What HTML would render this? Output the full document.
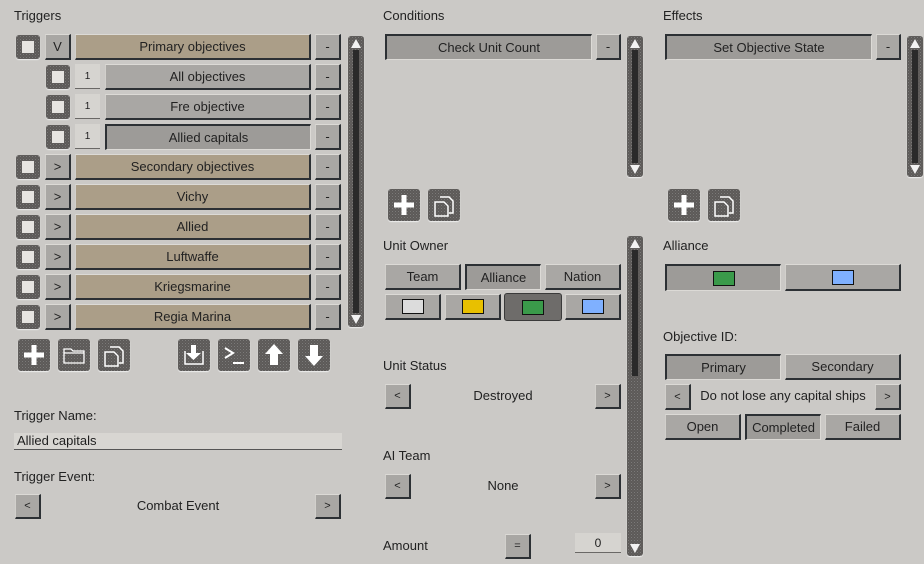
<!DOCTYPE html>
<html><head><meta charset="utf-8"><style>
body{margin:0;width:924px;height:564px;overflow:hidden;background:#cbc9c6;font-family:"Liberation Sans","DejaVu Sans",sans-serif;color:#1e1e1e;position:relative}
div{box-sizing:border-box}
.a{position:absolute}
.l{position:absolute;font-size:13px;color:#222}
.b{position:absolute;background:#a9a7a4;border-top:1px solid #dcdad6;border-left:1px solid #d2d0cc;border-right:2px solid #2c3034;border-bottom:2px solid #2c3034;display:flex;align-items:center;justify-content:center;font-size:13px;color:#222}
.p{border-top:2px solid #2c3034;border-left:2px solid #2c3034;border-right:1px solid #dcdad6;border-bottom:1px solid #dcdad6;background:#9d9b98}
.t{background:#ab9e88}
.m{position:absolute;background:radial-gradient(circle,#7c7a78 0.7px,transparent 1.2px) 0 0/3px 3px,radial-gradient(circle,#625f5d 0.8px,transparent 1.3px) 1.5px 1.5px/3px 3px,#454342;border-radius:3px;box-shadow:0 1px 1px #eee}
.cb::after{content:"";position:absolute;left:6px;top:6px;width:12px;height:12px;background:#e6e4e0}
.n{position:absolute;background:#d6d4d0;border-bottom:1px solid #6a6866;font-size:10px;display:flex;align-items:center;justify-content:center}
.sb .tr{position:absolute;left:5px;top:14px;bottom:14px;width:6px;background:#2a2a2a}
.sb .u,.sb .d{position:absolute;left:3px;width:0;height:0;border-left:5px solid transparent;border-right:5px solid transparent}
.sb .u{top:3px;border-bottom:9px solid #f2f2f2}
.sb .d{bottom:3px;border-top:9px solid #f2f2f2}
.sw{width:22px;height:15px;border:1px solid #111}
.ic svg{position:absolute;left:0;top:0}
</style></head><body>

<div class="l" style="left:14px;top:8px">Triggers</div>
<div class="l" style="left:383px;top:8px">Conditions</div>
<div class="l" style="left:663px;top:8px">Effects</div>

<div class="m cb" style="left:16px;top:35px;width:24px;height:24px"></div>
<div class="b" style="left:45px;top:34px;width:26px;height:26px">V</div>
<div class="b t" style="left:75px;top:34px;width:236px;height:26px">Primary objectives</div>
<div class="b" style="left:315px;top:34px;width:26px;height:26px">-</div>

<div class="m cb" style="left:46px;top:65px;width:24px;height:24px"></div>
<div class="n" style="left:75px;top:64px;width:25px;height:25px">1</div>
<div class="b" style="left:105px;top:64px;width:206px;height:26px">All objectives</div>
<div class="b" style="left:315px;top:64px;width:26px;height:26px">-</div>

<div class="m cb" style="left:46px;top:95px;width:24px;height:24px"></div>
<div class="n" style="left:75px;top:94px;width:25px;height:25px">1</div>
<div class="b" style="left:105px;top:94px;width:206px;height:26px">Fre objective</div>
<div class="b" style="left:315px;top:94px;width:26px;height:26px">-</div>

<div class="m cb" style="left:46px;top:125px;width:24px;height:24px"></div>
<div class="n" style="left:75px;top:124px;width:25px;height:25px">1</div>
<div class="b p" style="left:105px;top:124px;width:206px;height:26px">Allied capitals</div>
<div class="b" style="left:315px;top:124px;width:26px;height:26px">-</div>

<div class="m cb" style="left:16px;top:155px;width:24px;height:24px"></div>
<div class="b" style="left:45px;top:154px;width:26px;height:26px">&gt;</div>
<div class="b t" style="left:75px;top:154px;width:236px;height:26px">Secondary objectives</div>
<div class="b" style="left:315px;top:154px;width:26px;height:26px">-</div>

<div class="m cb" style="left:16px;top:185px;width:24px;height:24px"></div>
<div class="b" style="left:45px;top:184px;width:26px;height:26px">&gt;</div>
<div class="b t" style="left:75px;top:184px;width:236px;height:26px">Vichy</div>
<div class="b" style="left:315px;top:184px;width:26px;height:26px">-</div>

<div class="m cb" style="left:16px;top:215px;width:24px;height:24px"></div>
<div class="b" style="left:45px;top:214px;width:26px;height:26px">&gt;</div>
<div class="b t" style="left:75px;top:214px;width:236px;height:26px">Allied</div>
<div class="b" style="left:315px;top:214px;width:26px;height:26px">-</div>

<div class="m cb" style="left:16px;top:245px;width:24px;height:24px"></div>
<div class="b" style="left:45px;top:244px;width:26px;height:26px">&gt;</div>
<div class="b t" style="left:75px;top:244px;width:236px;height:26px">Luftwaffe</div>
<div class="b" style="left:315px;top:244px;width:26px;height:26px">-</div>

<div class="m cb" style="left:16px;top:275px;width:24px;height:24px"></div>
<div class="b" style="left:45px;top:274px;width:26px;height:26px">&gt;</div>
<div class="b t" style="left:75px;top:274px;width:236px;height:26px">Kriegsmarine</div>
<div class="b" style="left:315px;top:274px;width:26px;height:26px">-</div>

<div class="m cb" style="left:16px;top:305px;width:24px;height:24px"></div>
<div class="b" style="left:45px;top:304px;width:26px;height:26px">&gt;</div>
<div class="b t" style="left:75px;top:304px;width:236px;height:26px">Regia Marina</div>
<div class="b" style="left:315px;top:304px;width:26px;height:26px">-</div>

<div class="m sb" style="left:348px;top:36px;width:16px;height:291px"><div class="tr"></div><div class="u"></div><div class="d"></div></div>

<div class="m ic" style="left:18px;top:339px;width:32px;height:32px"><svg width="32" height="32"><path d="M16 6V26M6 16H26" stroke="#fff" stroke-width="5"/></svg></div>
<div class="m ic" style="left:58px;top:339px;width:32px;height:32px"><svg width="32" height="32"><path d="M6 10h7l2 2h11v12H6z M6 14H26" stroke="#fff" stroke-width="1.3" fill="none"/></svg></div>
<div class="m ic" style="left:98px;top:339px;width:32px;height:32px"><svg width="32" height="32"><path d="M12 8h9l4 4v12h-4M7 13h9l4 4v10H7z" stroke="#fff" stroke-width="1.5" fill="none"/></svg></div>
<div class="m ic" style="left:178px;top:339px;width:32px;height:32px"><svg width="32" height="32"><path d="M7 12v13h18V12" stroke="#fff" stroke-width="1.5" fill="none"/><path d="M13 6h5v8h5l-7.5 7-7.5-7h5z" fill="#fff"/></svg></div>
<div class="m ic" style="left:218px;top:339px;width:32px;height:32px"><svg width="32" height="32"><path d="M7 9l8 5-8 5M15 24h11" stroke="#fff" stroke-width="2" fill="none"/></svg></div>
<div class="m ic" style="left:258px;top:339px;width:32px;height:32px"><svg width="32" height="32"><path d="M16 5l9 10h-5v11h-8V15H7z" fill="#fff"/></svg></div>
<div class="m ic" style="left:298px;top:339px;width:32px;height:32px"><svg width="32" height="32"><path d="M16 27l9-10h-5V6h-8v11H7z" fill="#fff"/></svg></div>

<div class="l" style="left:14px;top:408px">Trigger Name:</div>
<div class="a" style="left:14px;top:433px;width:328px;height:17px;background:#d8d6d2;border-bottom:1px solid #555;font-size:13px;padding-left:3px;line-height:16px">Allied capitals</div>
<div class="l" style="left:14px;top:469px">Trigger Event:</div>
<div class="b" style="left:15px;top:494px;width:26px;height:25px;font-size:11px">&lt;</div>
<div class="l" style="left:100px;top:498px;width:156px;text-align:center">Combat Event</div>
<div class="b" style="left:315px;top:494px;width:26px;height:25px;font-size:11px">&gt;</div>

<div class="b p" style="left:385px;top:34px;width:207px;height:26px">Check Unit Count</div>
<div class="b" style="left:596px;top:34px;width:25px;height:26px">-</div>
<div class="m sb" style="left:627px;top:36px;width:16px;height:141px"><div class="tr"></div><div class="u"></div><div class="d"></div></div>
<div class="m ic" style="left:388px;top:189px;width:32px;height:32px"><svg width="32" height="32"><path d="M16 6V26M6 16H26" stroke="#fff" stroke-width="5"/></svg></div>
<div class="m ic" style="left:428px;top:189px;width:32px;height:32px"><svg width="32" height="32"><path d="M12 8h9l4 4v12h-4M7 13h9l4 4v10H7z" stroke="#fff" stroke-width="1.5" fill="none"/></svg></div>

<div class="l" style="left:383px;top:238px">Unit Owner</div>
<div class="b" style="left:385px;top:264px;width:76px;height:26px">Team</div>
<div class="b p" style="left:465px;top:264px;width:76px;height:26px">Alliance</div>
<div class="b" style="left:545px;top:264px;width:76px;height:26px">Nation</div>
<div class="b" style="left:385px;top:294px;width:56px;height:26px"><div class="sw" style="background:#dcdcdc"></div></div>
<div class="b" style="left:445px;top:294px;width:56px;height:26px"><div class="sw" style="background:#e8c000"></div></div>
<div class="b" style="left:504px;top:293px;width:58px;height:28px;background:#6e6c6a;border:1px solid #3a3a3a;border-radius:3px"><div class="sw" style="background:#3a9a4a"></div></div>
<div class="b" style="left:565px;top:294px;width:56px;height:26px"><div class="sw" style="background:#7fb0ff"></div></div>
<div class="m sb" style="left:627px;top:236px;width:16px;height:320px"><div class="tr" style="bottom:180px"></div><div class="u"></div><div class="d"></div></div>

<div class="l" style="left:383px;top:358px">Unit Status</div>
<div class="b" style="left:385px;top:384px;width:26px;height:25px;font-size:11px">&lt;</div>
<div class="l" style="left:440px;top:388px;width:126px;text-align:center">Destroyed</div>
<div class="b" style="left:595px;top:384px;width:26px;height:25px;font-size:11px">&gt;</div>
<div class="l" style="left:383px;top:448px">AI Team</div>
<div class="b" style="left:385px;top:474px;width:26px;height:25px;font-size:11px">&lt;</div>
<div class="l" style="left:440px;top:478px;width:126px;text-align:center">None</div>
<div class="b" style="left:595px;top:474px;width:26px;height:25px;font-size:11px">&gt;</div>
<div class="l" style="left:383px;top:538px">Amount</div>
<div class="b" style="left:505px;top:534px;width:26px;height:25px;font-size:11px">=</div>
<div class="n" style="left:575px;top:533px;width:46px;height:20px;font-size:12px">0</div>

<div class="b p" style="left:665px;top:34px;width:207px;height:26px">Set Objective State</div>
<div class="b" style="left:876px;top:34px;width:25px;height:26px">-</div>
<div class="m sb" style="left:907px;top:36px;width:16px;height:141px"><div class="tr"></div><div class="u"></div><div class="d"></div></div>
<div class="m ic" style="left:668px;top:189px;width:32px;height:32px"><svg width="32" height="32"><path d="M16 6V26M6 16H26" stroke="#fff" stroke-width="5"/></svg></div>
<div class="m ic" style="left:708px;top:189px;width:32px;height:32px"><svg width="32" height="32"><path d="M12 8h9l4 4v12h-4M7 13h9l4 4v10H7z" stroke="#fff" stroke-width="1.5" fill="none"/></svg></div>

<div class="l" style="left:663px;top:238px">Alliance</div>
<div class="b p" style="left:665px;top:264px;width:116px;height:27px"><div class="sw" style="background:#3a9a4a"></div></div>
<div class="b" style="left:785px;top:264px;width:116px;height:27px"><div class="sw" style="background:#7fb0ff"></div></div>

<div class="l" style="left:663px;top:329px">Objective ID:</div>
<div class="b p" style="left:665px;top:354px;width:116px;height:26px">Primary</div>
<div class="b" style="left:785px;top:354px;width:116px;height:26px">Secondary</div>
<div class="b" style="left:665px;top:384px;width:26px;height:26px;font-size:11px">&lt;</div>
<div class="l" style="left:692px;top:388px;width:182px;text-align:center">Do not lose any capital ships</div>
<div class="b" style="left:875px;top:384px;width:26px;height:26px;font-size:11px">&gt;</div>
<div class="b" style="left:665px;top:414px;width:76px;height:26px">Open</div>
<div class="b p" style="left:745px;top:414px;width:76px;height:26px">Completed</div>
<div class="b" style="left:825px;top:414px;width:76px;height:26px">Failed</div>

</body></html>
